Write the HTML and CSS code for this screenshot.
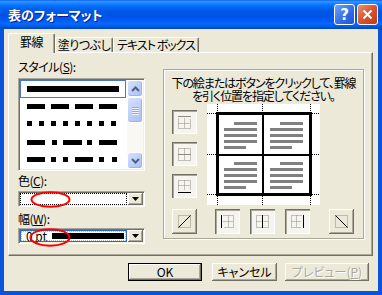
FILE: index.html
```html
<!DOCTYPE html>
<html lang="ja">
<head>
    <meta charset="UTF-8">
    <title>表のフォーマット</title>
    <link rel="stylesheet" href="styles.css">
</head>
<body>
<div class="window">
    <div class="titlebar">
        <span class="title">表のフォーマット</span>
        <span class="cap help">?</span>
        <span class="cap close">
            <svg width="11" height="11" viewBox="0 0 11 11"><path d="M1.5 1.5L9.5 9.5M9.5 1.5L1.5 9.5"/></svg>
        </span>
    </div>

    <div class="client">
        <div class="tabs">
            <div class="tab tab-lines active">罫線</div>
            <div class="tab tab-fill">塗りつぶし</div>
            <div class="tab tab-text">テキスト ボックス</div>
        </div>

        <div class="panel">
            <!-- line style / colour / weight -->
            <div class="left">
                <div class="label">スタイル(<u>S</u>):</div>
                <div class="listbox">
                    <svg class="styles" width="107" height="89" viewBox="0 0 107 89">
                        <rect class="focus" x="0.5" y="0.5" width="105" height="17"/>
                        <rect x="7" y="6" width="92" height="6"/>
                        <path d="M7 24h18v5h-18z M31 24h18v5h-18z M55 24h18v5h-18z M79 24h18v5h-18z"/>
                        <path d="M7 41h5v5h-5z M19 41h5v5h-5z M31 41h5v5h-5z M43 41h5v5h-5z M55 41h5v5h-5z M67 41h5v5h-5z M79 41h5v5h-5z M91 41h5v5h-5z"/>
                        <path d="M7 60h18v5h-18z M32 60h5v5h-5z M43 60h19v5h-19z M67 60h5v5h-5z M79 60h18v5h-18z"/>
                        <path d="M7 77h18v5h-18z M31 77h5v5h-5z M43 77h5v5h-5z M55 77h18v5h-18z M79 77h5v5h-5z M92 77h5v5h-5z"/>
                    </svg>
                    <div class="scrollbar">
                        <div class="sb-btn">
                            <svg width="9" height="6" viewBox="0 0 9 6"><path d="M1 5L4.5 1.5L8 5"/></svg>
                        </div>
                        <div class="sb-thumb">
                            <span></span><span></span><span></span><span></span>
                        </div>
                        <div class="sb-track"></div>
                        <div class="sb-btn">
                            <svg width="9" height="6" viewBox="0 0 9 6"><path d="M1 1L4.5 4.5L8 1"/></svg>
                        </div>
                    </div>
                </div>

                <div class="label label-gap">色(<u>C</u>):</div>
                <div class="combo">
                    <div class="field dotted"></div>
                    <div class="drop"><svg width="7" height="4" viewBox="0 0 7 4"><path d="M0 0h7l-3.5 4z"/></svg></div>
                    <svg class="mark mark-color" width="42" height="18" viewBox="0 0 42 18"><ellipse cx="20.5" cy="8.5" rx="19" ry="7.2"/></svg>
                </div>

                <div class="label label-gap2">幅(<u>W</u>):</div>
                <div class="combo">
                    <div class="field selected">
                        <span class="value">0 pt</span>
                        <span class="weight"></span>
                    </div>
                    <div class="drop"><svg width="7" height="4" viewBox="0 0 7 4"><path d="M0 0h7l-3.5 4z"/></svg></div>
                    <svg class="mark mark-weight" width="43" height="20" viewBox="0 0 43 20"><ellipse cx="21" cy="9.5" rx="19.5" ry="8.2"/></svg>
                </div>
            </div>

            <!-- border picker -->
            <div class="group">
                <p class="hint">下の絵またはボタンをクリックして、罫線<br>を引く位置を指定してください。</p>
                <div class="pick">
                    <div class="side">
                        <div class="tb on">
                            <svg class="ico" width="13" height="13" viewBox="0 0 13 13"><path class="dot" d="M0.5 2.5V12.5H12.5V2.5M6.5 2.5V12.5M0.5 7.5H12.5"/><path class="solid grey" d="M0 0.5H13"/></svg>
                        </div>
                        <div class="tb on">
                            <svg class="ico" width="13" height="13" viewBox="0 0 13 13"><path class="dot" d="M0.5 0.5H12.5V12.5H0.5Z M6.5 0.5V12.5"/><path class="solid grey" d="M0 6.5H13"/></svg>
                        </div>
                        <div class="tb on">
                            <svg class="ico" width="13" height="13" viewBox="0 0 13 13"><path class="dot" d="M0.5 10.5V0.5H12.5V10.5M6.5 0.5V10.5M0.5 5.5H12.5"/><path class="solid" d="M0 12.5H13"/></svg>
                        </div>
                    </div>
                    <div class="preview">
                        <svg width="113" height="101" viewBox="0 0 113 101">
                            <path class="tick" d="M10.5 0V8M55.5 0V8M103.5 0V8M10.5 92V101M55.5 92V101M103.5 92V101M0 9.5H9M0 50.5H9M0 90.5H9M105 9.5H113M105 50.5H113M105 90.5H113"/>
                            <g class="bars">
                                <rect x="27" y="18" width="23" height="3"/>
                                <rect x="17" y="24" width="33" height="3"/>
                                <rect x="17" y="30" width="33" height="3"/>
                                <rect x="17" y="36" width="33" height="3"/>
                                <rect x="17" y="42" width="22" height="3"/>
                                <rect x="73" y="18" width="23" height="3"/>
                                <rect x="63" y="24" width="33" height="3"/>
                                <rect x="63" y="30" width="33" height="3"/>
                                <rect x="63" y="36" width="33" height="3"/>
                                <rect x="63" y="42" width="22" height="3"/>
                                <rect x="27" y="58" width="23" height="3"/>
                                <rect x="17" y="64" width="33" height="3"/>
                                <rect x="17" y="70" width="33" height="3"/>
                                <rect x="17" y="76" width="33" height="3"/>
                                <rect x="17" y="82" width="22" height="3"/>
                                <rect x="73" y="58" width="23" height="3"/>
                                <rect x="63" y="64" width="33" height="3"/>
                                <rect x="63" y="70" width="33" height="3"/>
                                <rect x="63" y="76" width="33" height="3"/>
                                <rect x="63" y="82" width="22" height="3"/>
                            </g>
                            <g class="rules">
                                <rect x="9" y="8" width="96" height="3"/>
                                <rect x="9" y="89" width="96" height="3"/>
                                <rect x="9" y="8" width="3" height="84"/>
                                <rect x="102" y="8" width="3" height="84"/>
                                <rect x="55" y="11" width="2" height="78"/>
                                <rect x="12" y="50" width="90" height="2"/>
                            </g>
                        </svg>
                    </div>
                </div>
                <div class="pick-row">
                    <div class="tb">
                        <svg class="ico" width="13" height="13" viewBox="0 0 13 13"><path class="dot" d="M0.5 0.5H12.5V12.5H0.5Z"/><path class="solid" d="M0.5 12.5L12.5 0.5"/></svg>
                    </div>
                    <div class="mid">
                        <div class="tb on">
                            <svg class="ico" width="13" height="13" viewBox="0 0 13 13"><path class="dot" d="M2.5 0.5H12.5V12.5H2.5M7.5 0.5V12.5M2.5 6.5H12.5"/><path class="solid" d="M0.5 0V13"/></svg>
                        </div>
                        <div class="tb on">
                            <svg class="ico" width="13" height="13" viewBox="0 0 13 13"><path class="dot" d="M0.5 0.5H12.5V12.5H0.5Z M0.5 6.5H12.5"/><path class="solid" d="M6.5 0V13"/></svg>
                        </div>
                        <div class="tb on">
                            <svg class="ico" width="13" height="13" viewBox="0 0 13 13"><path class="dot" d="M10.5 0.5H0.5V12.5H10.5M5.5 0.5V12.5M0.5 6.5H10.5"/><path class="solid" d="M12.5 0V13"/></svg>
                        </div>
                    </div>
                    <div class="tb">
                        <svg class="ico" width="13" height="13" viewBox="0 0 13 13"><path class="dot" d="M0.5 0.5H12.5V12.5H0.5Z"/><path class="solid" d="M0.5 0.5L12.5 12.5"/></svg>
                    </div>
                </div>
            </div>
        </div>

        <div class="actions">
            <button class="btn btn-ok default">OK</button>
            <button class="btn btn-cancel">キャンセル</button>
            <button class="btn btn-preview" disabled>プレビュー(<u>P</u>)</button>
        </div>
    </div>
</div>
</body>
</html>
```

FILE: styles.css
```css
* {
    box-sizing: border-box;
}
body {
    margin: 0;
    font-family: "Noto Sans CJK JP", "Noto Sans", sans-serif;
    font-size: 12px;
    font-feature-settings: "palt";
    color: #000;
    background: #ECE9D8;
}
.window {
    width: 382px;
    height: 295px;
    display: flex;
    flex-direction: column;
    background: #0855DD;
}
.titlebar {
    height: 29px;
    display: flex;
    align-items: center;
    gap: 2px;
    padding: 0 4px 0 8px;
    background: linear-gradient(to bottom, #0058EE 0%, #3593FF 4%, #288EFF 8%, #127DFF 14%, #036FFC 20%, #0262EE 30%, #0057E5 40%, #0054E3 50%, #0055EB 62%, #005BF5 72%, #026AFE 80%, #0062EF 88%, #0052D6 94%, #0046C0 100%);
}
.title {
    flex: 1;
    color: #fff;
    font-weight: bold;
    font-size: 13px;
    text-shadow: 1px 1px #0A1E8C;
}
.cap {
    width: 21px;
    height: 21px;
    border: 1px solid #fff;
    border-radius: 3px;
    display: flex;
    align-items: center;
    justify-content: center;
}
.help {
    background: linear-gradient(135deg, #6FA4FA, #2F6BE6 60%, #1D55D2);
    color: #fff;
    font: bold 15px "DejaVu Sans", sans-serif;
}
.close {
    background: linear-gradient(135deg, #F0916F, #DA5330 50%, #C23A16);
}
.close path {
    stroke: #fff;
    stroke-width: 2;
}
.client {
    flex: 1;
    display: flex;
    flex-direction: column;
    background: #ECE9D8;
    border: 4px solid #0855DD;
    border-top: 0;
    padding: 4px 5px 0 4px;
}

/* tabs */
.tabs {
    height: 19px;
    display: flex;
    align-items: flex-end;
    position: relative;
    z-index: 1;
}
.tab {
    height: 15px;
    line-height: 14px;
    text-align: center;
    white-space: nowrap;
    letter-spacing: -0.5px;
    border: 1px solid;
    border-color: #fff #716F64 transparent #fff;
    border-bottom: 0;
    border-radius: 2px 2px 0 0;
    box-shadow: inset -1px 0 #ACA899;
}
.tab.active {
    height: 20px;
    margin-bottom: -1px;
    padding-top: 1px;
    background: #ECE9D8;
}
.tab-lines { width: 47px; }
.tab-fill { width: 58px; }
.tab-text { width: 86px; letter-spacing: -1px; }

.panel {
    height: 204px;
    display: flex;
    padding: 7px 0 0 9px;
    border: 1px solid;
    border-color: #fff #716F64 #716F64 #fff;
    box-shadow: inset -1px -1px #ACA899;
}

/* left column */
.left {
    width: 127px;
    display: flex;
    flex-direction: column;
}
.label {
    height: 13px;
    line-height: 13px;
    letter-spacing: -0.5px;
}
.label-gap { margin-top: 3px; }
.label-gap2 { margin-top: 5px; }
.listbox {
    margin-top: 5px;
    height: 93px;
    display: flex;
    padding: 1px;
    background: #fff;
    border: 1px solid;
    border-color: #ACA899 #fff #fff #ACA899;
    box-shadow: inset 1px 1px #716F64, inset -1px -1px #F1EFE2;
}
.styles .focus {
    fill: none;
    stroke: #4A79C9;
}
.scrollbar {
    width: 16px;
    display: flex;
    flex-direction: column;
    background: #F9F8F3;
}
.sb-btn, .sb-thumb {
    height: 17px;
    display: flex;
    align-items: center;
    justify-content: center;
    border: 1px solid #fff;
    border-radius: 3px;
    background: linear-gradient(135deg, #D6E2FD, #BACCF8 60%, #A9BEF2);
    box-shadow: inset -1px -1px #9DB5EE;
}
.sb-btn path {
    fill: none;
    stroke: #4D6185;
    stroke-width: 2;
}
.sb-thumb {
    height: 26px;
    flex-direction: column;
    gap: 1px;
}
.sb-thumb span {
    width: 7px;
    height: 1px;
    background: #8DA9EC;
    box-shadow: 0 1px #EEF3FE;
}
.sb-track {
    flex: 1;
}

.combo {
    position: relative;
    margin-top: 3px;
    height: 16px;
    display: flex;
    padding: 1px;
    background: #fff;
    border: 1px solid;
    border-color: #ACA899 #fff #fff #ACA899;
    box-shadow: inset 1px 1px #716F64, inset -1px -1px #F1EFE2;
}
.label-gap + .combo { margin-top: 4px; }
.field {
    flex: 1;
    margin-right: 1px;
}
.field.dotted {
    border: 1px dotted #000;
}
.field.selected {
    display: flex;
    align-items: center;
    padding-left: 5px;
    border: 1px solid #316AC5;
    outline: 1px dotted #C7B98A;
    outline-offset: -2px;
}
.value {
    line-height: 12px;
}
.weight {
    width: 72px;
    height: 6px;
    margin-left: 5px;
    background: #000;
}
.drop {
    width: 15px;
    display: flex;
    align-items: center;
    justify-content: center;
    background: #ECE9D8;
    box-shadow: inset -1px -1px #716F64, inset 1px 1px #fff, inset -2px -2px #ACA899;
}
.mark {
    position: absolute;
    top: -1px;
}
.mark ellipse {
    fill: none;
    stroke: #F00;
    stroke-width: 2;
}
.mark-color { left: 11px; }
.mark-weight { left: 10px; }

/* border picker group */
.group {
    margin: 9px 0 0 18px;
    width: 201px;
    height: 170px;
    padding-top: 6px;
    border: 1px solid #ACA899;
    box-shadow: inset 1px 1px #fff, 1px 1px #fff;
}
.hint {
    margin: 0;
    line-height: 13px;
    text-align: center;
    white-space: nowrap;
    letter-spacing: -1.1px;
}
.pick {
    display: flex;
    margin: 2px 0 0 8px;
}
.side {
    display: flex;
    flex-direction: column;
    gap: 8px;
    padding-top: 6px;
}
.tb {
    width: 25px;
    height: 24px;
    display: flex;
    align-items: center;
    justify-content: center;
    background: #ECE9D8;
    box-shadow: inset -1px -1px #716F64, inset 1px 1px #fff, inset -2px -2px #ACA899;
}
.tb.on {
    background: #F5F4EE;
    box-shadow: inset 1px 1px #716F64, inset 2px 2px #ACA899, inset -1px -1px #fff;
}
.ico .dot {
    fill: none;
    stroke: #8C8A80;
    stroke-dasharray: 1 1;
}
.ico .solid {
    fill: none;
    stroke: #000;
}
.ico .solid.grey {
    stroke: #8C8A80;
}
.preview {
    margin-left: 10px;
    width: 113px;
    height: 101px;
    background: #fff;
}
.preview .tick {
    fill: none;
    stroke: #000;
    stroke-dasharray: 1 1;
}
.preview .bars { fill: #808080; }
.preview .rules { fill: #000; }
.pick-row {
    display: flex;
    gap: 18px;
    margin: 4px 0 0 8px;
}
.pick-row .tb {
    height: 25px;
}
.mid {
    display: flex;
    gap: 10px;
    margin-right: 1px;
}

/* dialog buttons */
.actions {
    display: flex;
    justify-content: flex-end;
    gap: 8px;
    margin-top: 7px;
    padding-right: 4px;
}
.btn {
    height: 18px;
    padding: 0;
    border: 0;
    font: inherit;
    line-height: 18px;
    color: #000;
    background: #ECE9D8;
    box-shadow: inset -1px -1px #716F64, inset 1px 1px #fff, inset -2px -2px #ACA899;
}
.btn.default {
    box-shadow: inset 0 0 0 1px #000, inset -2px -2px #716F64, inset 2px 2px #fff, inset -3px -3px #ACA899;
}
.btn-ok { width: 74px; margin-right: 2px; }
.btn-cancel { width: 65px; }
.btn-preview { width: 84px; }
.btn:disabled {
    color: #ACA899;
    text-shadow: 1px 1px #fff;
}
```
